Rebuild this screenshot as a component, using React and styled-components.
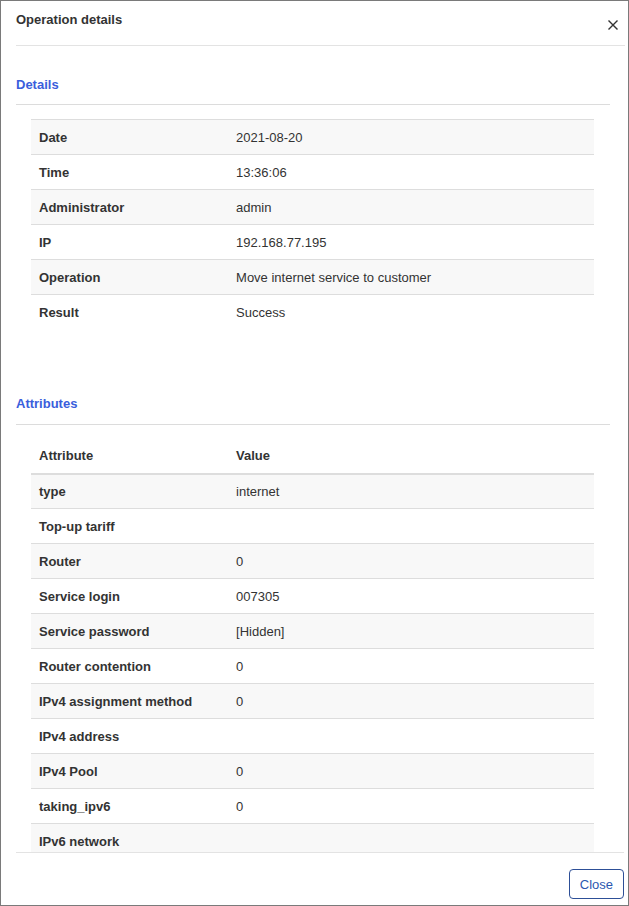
import React from "react";
import styled, { createGlobalStyle } from "styled-components";

const Global = createGlobalStyle`
  html, body { margin: 0; padding: 0; background: #fff; }
  body { font-family: "Liberation Sans", Arial, sans-serif; font-size: 13px; color: #333; }
  * { box-sizing: border-box; }
`;

const Modal = styled.div`
  width: 629px;
  height: 906px;
  border: 1px solid #7a7a7a;
  display: flex;
  flex-direction: column;
  background: #fff;
  overflow: hidden;
`;

const Header = styled.div`
  height: 45px;
  margin: 0 3px 0 15px;
  border-bottom: 1px solid #e3e3e3;
  display: flex;
  align-items: flex-start;
  justify-content: space-between;
  flex-shrink: 0;
`;

const Title = styled.h4`
  margin: 10px 0 0 0;
  font-size: 13px;
  line-height: 18px;
  font-weight: bold;
  color: #333;
`;

const CloseX = styled.button`
  border: 0;
  background: none;
  padding: 0;
  margin: 18px 6px 0 0;
  width: 12px;
  height: 12px;
  display: flex;
  align-items: center;
  justify-content: center;
  cursor: pointer;
`;

const Body = styled.div`
  flex: 1;
  overflow: hidden;
  padding: 0 18px 0 15px;
`;

const Section = styled.section`
  margin-top: ${(p) => p.$top}px;
`;

const SectionTitle = styled.h5`
  margin: 0;
  font-size: 13px;
  line-height: 18px;
  font-weight: bold;
  color: #3a5edc;
  padding-bottom: ${(p) => p.$pb}px;
  border-bottom: 1px solid #dcdcdc;
`;

const Table = styled.table`
  width: 563px;
  margin: ${(p) => p.$mt}px 0 0 15px;
  border-collapse: collapse;
  table-layout: fixed;
`;

const Row = styled.tr`
  background: ${(p) => (p.$striped ? "#f8f8f8" : "#fff")};
  border-top: ${(p) => (p.$noTop ? "0" : "1px solid #dddddd")};
`;

const HeadRow = styled.tr`
  border-bottom: 2px solid #dddddd;
`;

const Cell = styled.td`
  height: 35px;
  padding: 0 8px;
  vertical-align: middle;
  font-weight: ${(p) => (p.$bold ? "bold" : "normal")};
  color: #333;
  width: ${(p) => (p.$label ? "35%" : "auto")};
  white-space: nowrap;
`;

const HeadCell = styled.th`
  height: 34px;
  padding: 0 8px 1px;
  text-align: left;
  font-weight: bold;
  color: #333;
  width: ${(p) => (p.$label ? "35%" : "auto")};
`;

const Footer = styled.div`
  height: 53px;
  margin: 0 4px 0 15px;
  border-top: 1px solid #e3e3e3;
  display: flex;
  justify-content: flex-end;
  align-items: flex-start;
  padding-top: 16px;
  flex-shrink: 0;
`;

const Button = styled.button`
  font-family: "Liberation Sans", Arial, sans-serif;
  font-size: 13px;
  height: 30px;
  padding: 0 10px;
  border: 1px solid #2d4f97;
  border-radius: 4px;
  background: #fff;
  color: #2b57b0;
  cursor: pointer;
`;

const details = [
  ["Date", "2021-08-20"],
  ["Time", "13:36:06"],
  ["Administrator", "admin"],
  ["IP", "192.168.77.195"],
  ["Operation", "Move internet service to customer"],
  ["Result", "Success"],
];

const attributes = [
  ["type", "internet"],
  ["Top-up tariff", ""],
  ["Router", "0"],
  ["Service login", "007305"],
  ["Service password", "[Hidden]"],
  ["Router contention", "0"],
  ["IPv4 assignment method", "0"],
  ["IPv4 address", ""],
  ["IPv4 Pool", "0"],
  ["taking_ipv6", "0"],
  ["IPv6 network", ""],
];

export default function App() {
  return (
    <>
      <Global />
      <Modal>
        <Header>
          <Title>Operation details</Title>
          <CloseX aria-label="Close">
            <svg width="10" height="10" viewBox="0 0 10 10">
              <path d="M1 1 L9 9 M9 1 L1 9" stroke="#333" strokeWidth="1.4" strokeLinecap="square" />
            </svg>
          </CloseX>
        </Header>
        <Body>
          <Section $top={30}>
            <SectionTitle $pb={10}>Details</SectionTitle>
            <Table $mt={14}>
              <tbody>
                {details.map(([k, v], i) => (
                  <Row key={k} $striped={i % 2 === 0}>
                    <Cell $bold $label>{k}</Cell>
                    <Cell>{v}</Cell>
                  </Row>
                ))}
              </tbody>
            </Table>
          </Section>
          <Section $top={65}>
            <SectionTitle $pb={11}>Attributes</SectionTitle>
            <Table $mt={15}>
              <thead>
                <HeadRow>
                  <HeadCell $label>Attribute</HeadCell>
                  <HeadCell>Value</HeadCell>
                </HeadRow>
              </thead>
              <tbody>
                {attributes.map(([k, v], i) => (
                  <Row key={k} $striped={i % 2 === 0} $noTop={i === 0}>
                    <Cell $bold $label>{k}</Cell>
                    <Cell>{v}</Cell>
                  </Row>
                ))}
              </tbody>
            </Table>
          </Section>
        </Body>
        <Footer>
          <Button>Close</Button>
        </Footer>
      </Modal>
    </>
  );
}
